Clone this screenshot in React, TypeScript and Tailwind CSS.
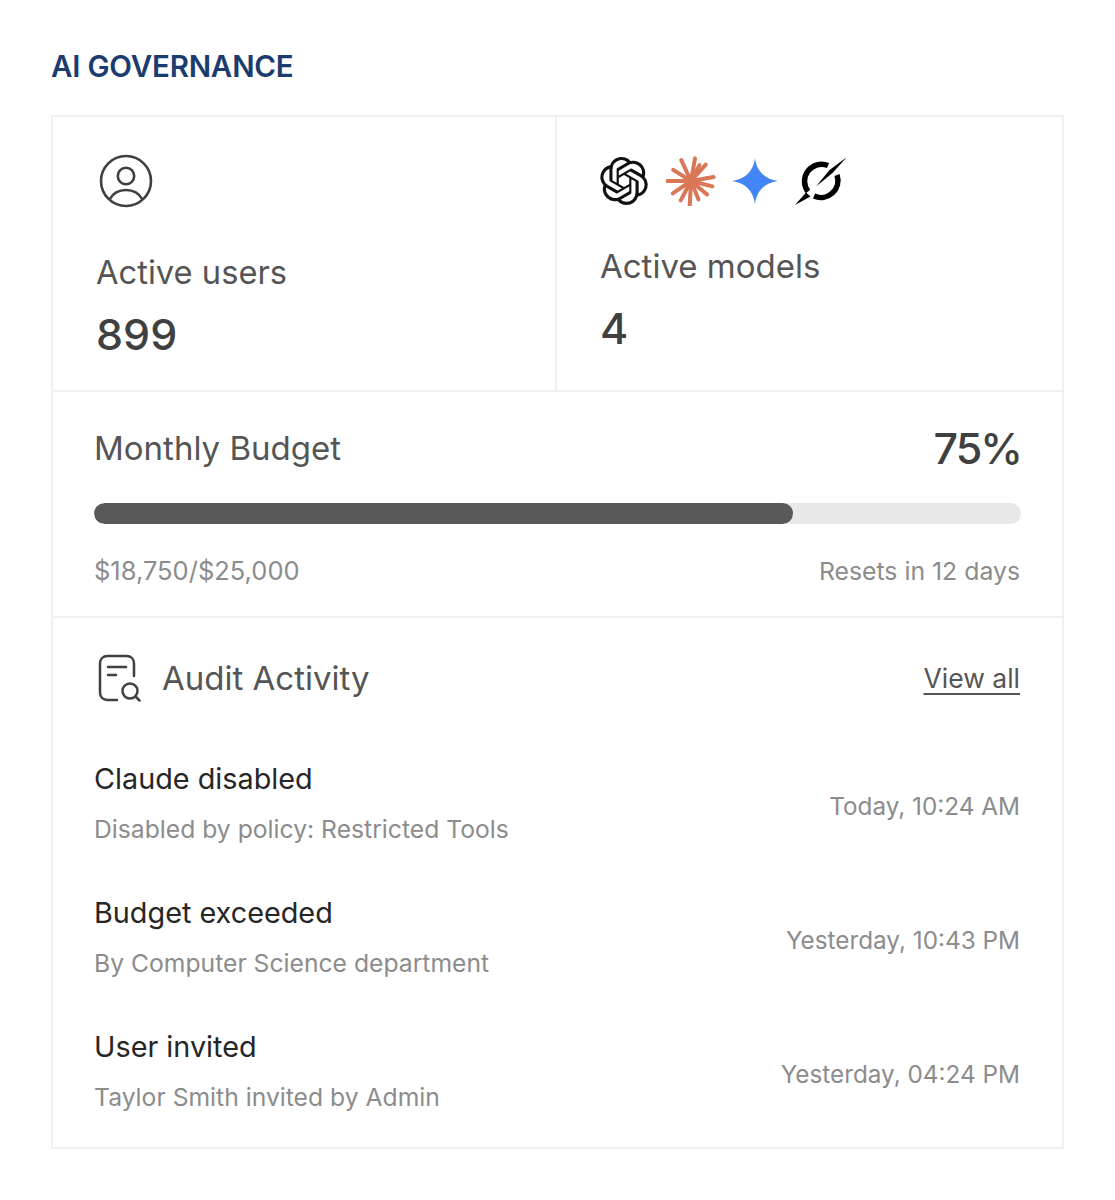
import { SiOpenai } from 'react-icons/si';

const activity = [
  { title: 'Claude disabled', sub: 'Disabled by policy: Restricted Tools', time: 'Today, 10:24 AM' },
  { title: 'Budget exceeded', sub: 'By Computer Science department', time: 'Yesterday, 10:43 PM' },
  { title: 'User invited', sub: 'Taylor Smith invited by Admin', time: 'Yesterday, 04:24 PM' },
];

const rays = [
  [-80, 23], [-48, 22], [-10, 23], [14, 22], [40, 21], [68, 20], [93, 24], [118, 22], [146, 22], [180, 24], [212, 21], [245, 23], [-62, 18],
];

function UserIcon() {
  return (
    <svg width="54" height="54" viewBox="0 0 54 54" fill="none" stroke="#404040" strokeWidth="2.6">
      <circle cx="27" cy="27" r="25" />
      <circle cx="27" cy="22" r="8.2" />
      <path d="M10.5 45.5C14 39 20 36 27 36s13 3 16.5 9.5" />
    </svg>
  );
}

function ClaudeIcon() {
  return (
    <svg width="50" height="50" viewBox="0 0 50 50" stroke="#d97757" strokeWidth="4" strokeLinecap="round">
      {rays.map(([angle, len]) => {
        const r = (angle * Math.PI) / 180;
        return <line key={angle} x1="25" y1="25" x2={25 + Math.cos(r) * len} y2={25 + Math.sin(r) * len} />;
      })}
      <circle cx="25" cy="25" r="6" fill="#d97757" stroke="none" />
    </svg>
  );
}

function GeminiIcon() {
  return (
    <svg width="46" height="46" viewBox="0 0 46 46">
      <path d="M23 0C24.5 13 33 21.5 46 23C33 24.5 24.5 33 23 46C21.5 33 13 24.5 0 23C13 21.5 21.5 13 23 0Z" fill="#4285f4" />
    </svg>
  );
}

function GrokIcon() {
  return (
    <svg width="54" height="50" viewBox="0 0 54 50" fill="none">
      <path d="M14 35.5A17 17 0 0 1 34 9.5" stroke="#000" strokeWidth="5.5" />
      <path d="M43 19A17 17 0 0 1 20 40" stroke="#000" strokeWidth="5.5" />
      <path d="M52.7 1.3L38.5 17L22 30.5L35.5 14Z" fill="#000" />
      <path d="M1 49L12 36.5L16.5 40.5Z" fill="#000" />
    </svg>
  );
}

function AuditIcon() {
  return (
    <svg width="44" height="48" viewBox="0 0 44 48" fill="none" stroke="#404040" strokeWidth="2.5" strokeLinecap="round">
      <path d="M19 46H9.5C5 46 2 43 2 38.5V9.5C2 5 5 2 9.5 2H28.5C33 2 36 5 36 9.5V22" />
      <path d="M10 13H28M10 21H18" />
      <circle cx="32" cy="37" r="7.5" />
      <path d="M37.5 42.5L41.5 46.5" />
    </svg>
  );
}

export default function App() {
  return (
    <div className="min-h-[1200px] bg-white px-[51px] pt-[48px] font-['Inter',sans-serif]">
      <h1 className="text-[29.5px] font-semibold leading-[36px] tracking-[-0.2px] text-[#1b3c6e]">AI GOVERNANCE</h1>

      <div className="mt-[31px] w-[1013px] border-2 border-[#f0f0f0]">
        <div className="flex h-[275px] border-b-2 border-[#f0f0f0]">
          <div className="w-[504px] border-r-2 border-[#f0f0f0] pl-[43px] pt-[37px]">
            <div className="ml-[3px]">
              <UserIcon />
            </div>
            <p className="mt-[44px] text-[32.7px] leading-[40px] text-[#555555]">Active users</p>
            <p className="mt-[18px] text-[43px] font-medium leading-[48px] text-[#404040]">899</p>
          </div>
          <div className="pl-[43px] pt-[38px]">
            <div className="flex h-[52px] items-center gap-[18px]">
              <SiOpenai className="h-[48px] w-[48px] text-[#111111]" />
              <ClaudeIcon />
              <div className="flex items-center gap-[16px]">
                <div className="-ml-[2px]">
                  <GeminiIcon />
                </div>
                <GrokIcon />
              </div>
            </div>
            <p className="mt-[39px] text-[33px] leading-[40px] text-[#555555]">Active models</p>
            <p className="mt-[18px] text-[43px] font-medium leading-[48px] text-[#404040]">4</p>
          </div>
        </div>

        <div className="h-[226px] border-b-2 border-[#f0f0f0] px-[41px] pt-[30px]">
          <div className="flex items-center justify-between">
            <span className="text-[33px] leading-[52px] text-[#555555]">Monthly Budget</span>
            <span className="text-[43px] font-medium leading-[52px] tracking-[-2px] text-[#404040]">75%</span>
          </div>
          <div className="mt-[29px] h-[21px] w-[927px] overflow-hidden rounded-full bg-[#e8e8e8]">
            <div className="h-full w-[699px] rounded-full bg-[#595959]" />
          </div>
          <div className="mt-[29px] flex items-center justify-between pr-[1px] leading-[36px] text-[#8c8c8c]">
            <span className="text-[25.5px]">$18,750/$25,000</span>
            <span className="text-[24.8px]">Resets in 12 days</span>
          </div>
        </div>

        <div className="h-[529px] px-[41px] pt-[35px]">
          <div className="flex h-[50px] items-center justify-between pr-[1px]">
            <div className="flex items-center gap-[20px]">
              <div className="ml-[4px]">
                <AuditIcon />
              </div>
              <span className="text-[33px] leading-[40px] text-[#555555]">Audit Activity</span>
            </div>
            <a className="text-[26.5px] leading-[36px] text-[#555555] underline underline-offset-[5px]">View all</a>
          </div>
          <div className="mt-[46px] flex flex-col gap-[24px]">
            {activity.map((row) => (
              <div key={row.title} className="flex h-[110px] items-center justify-between pr-[1px]">
                <div>
                  <p className="text-[28.8px] leading-[44px] text-[#262626]">{row.title}</p>
                  <p className="mt-[6px] text-[24.7px] leading-[44px] text-[#8c8c8c]">{row.sub}</p>
                </div>
                <span className="pt-[3px] text-[24.3px] leading-[36px] text-[#8c8c8c]">{row.time}</span>
              </div>
            ))}
          </div>
        </div>
      </div>
    </div>
  );
}
